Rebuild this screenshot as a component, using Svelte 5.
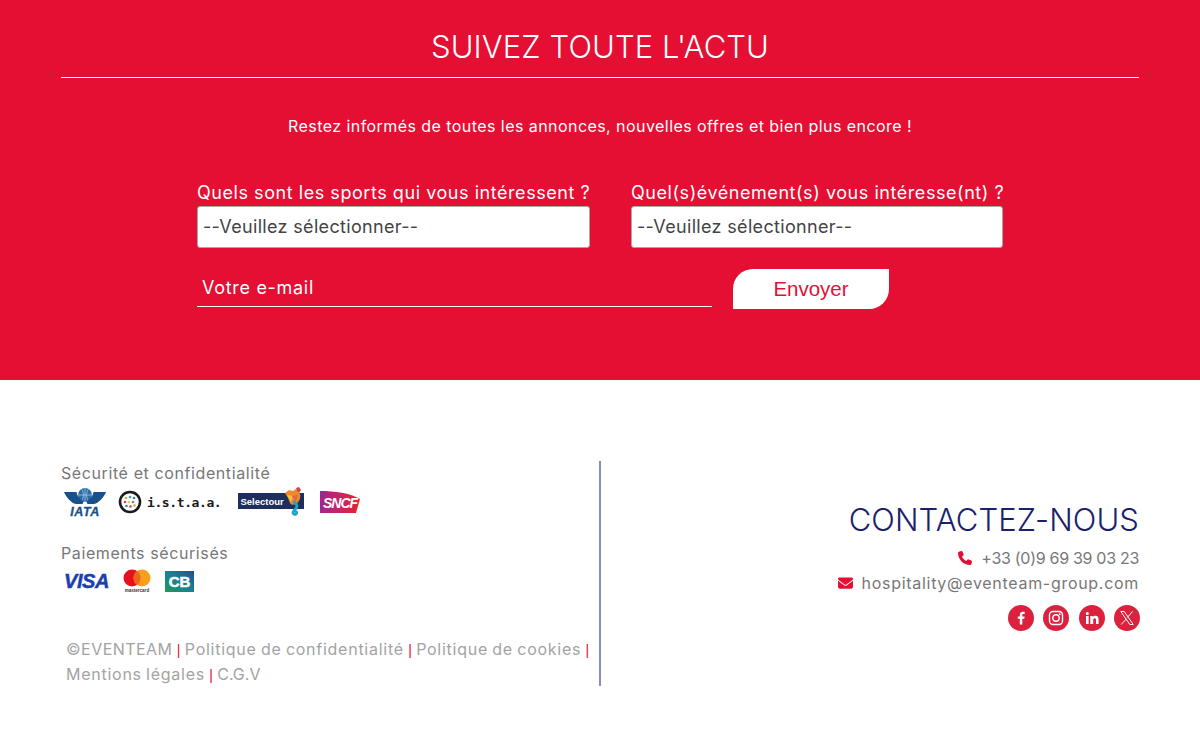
<script>
  const sports = ["--Veuillez sélectionner--"];
  const legal = ["Politique de confidentialité", "Politique de cookies", "Mentions légales", "C.G.V"];
</script>

<section class="newsletter">
  <h2>SUIVEZ TOUTE L'ACTU</h2>
  <p class="intro">Restez informés de toutes les annonces, nouvelles offres et bien plus encore !</p>
  <form class="form" onsubmit={(e) => e.preventDefault()}>
    <div class="selects">
      <label class="field sports">
        <span>Quels sont les sports qui vous intéressent ?</span>
        <select>
          {#each sports as s}<option>{s}</option>{/each}
        </select>
      </label>
      <label class="field events">
        <span>Quel(s)événement(s) vous intéresse(nt) ?</span>
        <select>
          {#each sports as s}<option>{s}</option>{/each}
        </select>
      </label>
    </div>
    <div class="send">
      <input type="email" placeholder="Votre e-mail" />
      <button type="submit">Envoyer</button>
    </div>
  </form>
</section>

<footer>
  <div class="left">
    <p class="cap">Sécurité et confidentialité</p>
    <div class="logos secure">
      <svg class="iata-logo" width="44" height="32" viewBox="0 -1 44 32">
        <circle cx="22" cy="8" r="7" fill="#2a6ca8" />
        <path d="M15 8h14M22 1v14M18.500 2c2.500 3 2.500 9 0 12M25.500 2c-2.500 3-2.500 9 0 12" stroke="#cfe0ee" stroke-width=".6" fill="none" />
        <path d="M1 5h12.500c.5 4 3 7 7 9.500l-1 2.500H13C8 16 3 10 1 5zM43 5H30.500c-.5 4-3 7-7 9.500l1 2.500H31c5-1 10-7 12-12z" fill="#17508a" />
        <text x="22" y="29" class="iata">IATA</text>
      </svg>
      <svg class="istaa" width="105" height="24" viewBox="0 0 105 24">
        <circle cx="12" cy="12" r="10" fill="#fff" stroke="#1a1a1a" stroke-width="2.600" />
        <g>
          <circle cx="8" cy="8" r="1.300" fill="#e9a23b" /><circle cx="12" cy="7" r="1.300" fill="#3aa6a0" /><circle cx="16" cy="8" r="1.300" fill="#5a6fb5" />
          <circle cx="7" cy="12" r="1.300" fill="#d8433f" /><circle cx="11" cy="12" r="1.300" fill="#f0c63c" /><circle cx="15" cy="12" r="1.300" fill="#4aa65a" />
          <circle cx="8.500" cy="16" r="1.300" fill="#3d7fc4" /><circle cx="12.500" cy="16.500" r="1.300" fill="#d8433f" /><circle cx="16.500" cy="15.500" r="1.300" fill="#e9a23b" />
        </g>
        <text x="29" y="17" class="istaa-text">i.s.t.a.a.</text>
      </svg>
      <svg class="selectour" width="68" height="30" viewBox="0 0 68 30">
        <rect x="0" y="6" width="66" height="16" fill="#1d2f5c" />
        <text x="2.500" y="17.500" class="sel-text">Selectour</text>
        <path d="M47 6l4-3 4 1 3-2 4 5c1 4-1 8-4 10-3 1-5 1-6-1l-2-5z" fill="#ef8a2c" />
        <path d="M49 8l6 1-2 6z" fill="#f3c23c" />
        <path d="M54 9l6-1-2 7z" fill="#e8643a" />
        <path d="M58 1l3-1 2 3-2 3-2-2z" fill="#d8433f" />
        <path d="M56 15c3.500 2 3.500 5 1.500 7-2 2-3.500 4-1.500 5 1.500 1 3 0 2.500-2" fill="none" stroke="#19a5c8" stroke-width="2.800" stroke-linecap="round" />
      </svg>
      <svg class="sncf" width="44" height="24" viewBox="0 0 44 24">
        <defs>
          <linearGradient id="sn" x1="0" x2="1" y1="0" y2="0">
            <stop offset="0" stop-color="#a2258f" /><stop offset=".55" stop-color="#c9265f" /><stop offset="1" stop-color="#e8212e" />
          </linearGradient>
        </defs>
        <path d="M2 1c15 0 30 2 40 8l-4 14H2z" fill="url(#sn)" />
        <text x="5" y="18" class="sncf-text">SNCF</text>
      </svg>
    </div>

    <p class="cap pay">Paiements sécurisés</p>
    <div class="logos payment">
      <svg class="visa-logo" width="46" height="20" viewBox="0 0 46 20"><text x="0" y="17" class="visa">VISA</text></svg>
      <svg width="30" height="24" viewBox="0 0 30 24">
        <circle cx="10" cy="9" r="8.500" fill="#e8101c" />
        <circle cx="20" cy="9" r="8.500" fill="#f99e1c" />
        <path d="M15 2.100a8.500 8.500 0 0 1 0 13.800a8.500 8.500 0 0 1 0-13.800z" fill="#f2641e" />
        <text x="15" y="23" class="mc">mastercard</text>
      </svg>
      <svg width="29" height="21" viewBox="0 0 29 21">
        <defs>
          <linearGradient id="cb" x1="0" x2="1" y1="1" y2="0">
            <stop offset="0" stop-color="#1f9a56" /><stop offset=".55" stop-color="#1b7d9a" /><stop offset="1" stop-color="#1c4f94" />
          </linearGradient>
        </defs>
        <rect width="29" height="21" fill="url(#cb)" />
        <text x="14.500" y="16" class="cb">CB</text>
      </svg>
    </div>

    <p class="legal">
      <span class="brand">©EVENTEAM</span> <i>|</i>
      {#each legal as item, idx}
        <span class:short={idx === 3}>{item}</span>{#if idx < legal.length - 1}{" "}<i>|</i>{" "}{/if}
      {/each}
    </p>
  </div>

  <div class="right">
    <h3>CONTACTEZ-NOUS</h3>
    <p class="line phone">
      <svg width="14" height="14" viewBox="0 0 512 512"><path fill="#e50e33" d="M164.900 24.600c-7.700-18.600-28-28.500-47.400-23.200l-88 24C12.100 30.200 0 46 0 64c0 247.400 200.600 448 448 448 18 0 33.800-12.100 38.600-29.500l24-88c5.300-19.400-4.600-39.700-23.200-47.400l-96-40c-16.300-6.800-35.200-2.100-46.300 11.600L304.700 368c-70.400-33.300-127.400-90.300-160.700-160.700l49.300-40.300c13.700-11.200 18.400-30 11.600-46.300l-40-96z" /></svg>
      <span>+33 (0)9 69 39 03 23</span>
    </p>
    <p class="line mail">
      <svg width="15" height="12" viewBox="0 0 512 384"><path fill="#e50e33" d="M48 0C21.500 0 0 21.500 0 48c0 15.100 7.100 29.300 19.200 38.400l217.600 163.200c11.400 8.500 27 8.500 38.400 0L492.800 86.400C504.900 77.300 512 63.100 512 48c0-26.500-21.500-48-48-48H48zM0 112v208c0 35.300 28.700 64 64 64h384c35.300 0 64-28.700 64-64V112L294.400 275.200c-22.800 17.100-54 17.100-76.800 0L0 112z" /></svg>
      <span>hospitality@eventeam-group.com</span>
    </p>
    <div class="social">
      <a href="#fb" aria-label="Facebook"><svg viewBox="0 0 26 26"><path fill="#fff" d="M14.300 19.500v-5.800h2l.3-2.300h-2.300V10c0-.7.2-1.100 1.100-1.100h1.300V6.800c-.3 0-1-.1-1.900-.1-1.800 0-3 1.100-3 3.100v1.600h-2v2.300h2v5.800z" /></svg></a>
      <a href="#ig" aria-label="Instagram"><svg viewBox="0 0 26 26"><rect x="6.500" y="6.500" width="13" height="13" rx="3.500" fill="none" stroke="#fff" stroke-width="1.400" /><circle cx="13" cy="13" r="3.200" fill="none" stroke="#fff" stroke-width="1.400" /><circle cx="16.800" cy="9.200" r=".9" fill="#fff" /></svg></a>
      <a href="#in" aria-label="LinkedIn"><svg viewBox="0 0 26 26"><path fill="#fff" d="M7 11h2.600v8H7zM8.300 7a1.500 1.500 0 1 1 0 3 1.500 1.500 0 0 1 0-3zM11.300 11h2.500v1.100c.4-.7 1.300-1.300 2.600-1.300 2.700 0 3.200 1.700 3.200 4V19H17v-3.700c0-.9 0-2.100-1.300-2.100s-1.500 1-1.500 2V19h-2.900z" /></svg></a>
      <a href="#x" aria-label="X"><svg viewBox="0 0 26 26"><path fill="none" stroke="#fff" stroke-width="1" d="M6.800 6.500h3.400l9 13h-3.400zM18.600 6.500l-5.200 5.900M12.400 13.800l-5.200 5.700" /></svg></a>
    </div>
  </div>
</footer>

<style>
  :global(body) {
    margin: 0;
    background: #fff;
    font-family: Inter, "Open Sans", sans-serif;
  }

  .newsletter {
    box-sizing: border-box;
    height: 380px;
    padding: 0 61px;
    background: #e50e33;
    color: #fff;
  }

  h2 {
    margin: 0;
    padding: 26px 0 10px;
    border-bottom: 1px solid #fff;
    font-size: 31px;
    line-height: 41px;
    font-weight: 300;
    text-align: center;
    letter-spacing: 0.1px;
  }

  .intro {
    margin: 38px 0 0;
    font-size: 16px;
    line-height: 20px;
    text-align: center;
    letter-spacing: 0.44px;
  }

  .form {
    margin: 44px 0 0 136px;
    width: 806px;
  }

  .selects {
    display: flex;
    gap: 41px;
  }

  .field {
    display: flex;
    flex-direction: column;
    font-size: 18px;
    line-height: 24px;
  }

  .sports { width: 393px; }
  .events { width: 372px; }

  .field span {
    white-space: nowrap;
    margin: 1px 0;
    letter-spacing: 0.55px;
  }

  select {
    appearance: none;
    box-sizing: border-box;
    height: 42px;
    padding: 0 5px;
    border: 1px solid #a9a9a9;
    border-radius: 3px;
    background: #fff;
    color: #444;
    font: inherit;
    font-size: 18px;
    letter-spacing: 0.33px;
  }

  .send {
    display: flex;
    align-items: flex-start;
    gap: 21px;
    margin-top: 21px;
  }

  input {
    box-sizing: border-box;
    width: 515px;
    height: 38px;
    padding: 0 5px;
    border: 0;
    border-bottom: 1px solid #fff;
    background: transparent;
    color: #fff;
    font: inherit;
    font-size: 18px;
    letter-spacing: 0.7px;
    outline: none;
  }

  input::placeholder {
    color: #fff;
    opacity: 1;
  }

  button {
    width: 156px;
    height: 40px;
    padding: 0;
    border: 0;
    border-radius: 20px 0 20px 0;
    background: #fff;
    color: #e50e33;
    font-family: "Liberation Sans", Arial, sans-serif;
    font-size: 20.500px;
  }

  footer {
    display: flex;
    justify-content: space-between;
    padding: 81px 61px 0;
  }

  .left {
    box-sizing: border-box;
    width: 540px;
    height: 225px;
    border-right: 2px solid #8a8cbc;
    color: #7a7a7a;
  }

  .cap {
    margin: 0;
    font-size: 16px;
    line-height: 24px;
    color: #777;
    letter-spacing: 0.6px;
  }

  .pay { margin-top: 24px; }

  .logos {
    display: flex;
    align-items: center;
  }

  .secure {
    height: 30px;
    margin-top: 2px;
    padding-left: 2px;
  }

  .iata-logo { margin-right: 11px; }
  .istaa { margin-right: 15px; }
  .selectour { margin-right: 12px; }

  .payment {
    height: 26px;
    margin-top: 3px;
    gap: 13px;
    padding-left: 3px;
  }

  .visa-logo { margin-right: -1px; }

  .legal {
    margin: 43px 0 0 5px;
    font-size: 16px;
    line-height: 24px;
    color: #a3a3a3;
    letter-spacing: 0.74px;
    word-spacing: -0.9px;
  }

  .brand { letter-spacing: 0.45px; }
  .short { letter-spacing: 0; }

  .legal i {
    font-family: "Liberation Sans", sans-serif;
    font-style: normal;
    font-size: 14px;
    letter-spacing: 0;
    color: #e50e33;
  }

  .iata {
    font: italic 700 12.500px "Liberation Sans", sans-serif;
    fill: #17508a;
    stroke: #17508a;
    stroke-width: 0.3;
    text-anchor: middle;
    letter-spacing: 0.6px;
  }

  .istaa-text {
    font: 700 13px "DejaVu Sans Mono", monospace;
    fill: #1a1a1a;
    letter-spacing: -0.4px;
  }

  .sel-text {
    font: 700 9.500px "Liberation Sans", sans-serif;
    fill: #fff;
  }

  .sncf-text {
    font: italic 700 14px "Liberation Sans", sans-serif;
    fill: #fff;
    letter-spacing: -1px;
  }

  .visa {
    font: italic 700 20px "Liberation Sans", sans-serif;
    fill: #1a3fb0;
    stroke: #1a3fb0;
    stroke-width: 0.5;
    letter-spacing: -0.4px;
  }

  .mc {
    font: 700 4.500px "Liberation Sans", sans-serif;
    fill: #333;
    text-anchor: middle;
  }

  .cb {
    font: 700 15px "Liberation Sans", sans-serif;
    fill: #fff;
    stroke: #fff;
    stroke-width: 0.5;
    text-anchor: middle;
  }

  .right {
    display: flex;
    flex-direction: column;
    align-items: flex-end;
    padding-top: 34px;
    color: #777;
  }

  h3 {
    margin: 0;
    font-size: 31px;
    line-height: 50px;
    font-weight: 300;
    letter-spacing: 0.1px;
    color: #1c1f6b;
  }

  .line {
    display: flex;
    align-items: center;
    gap: 9px;
    margin: 0;
    height: 25px;
    font-size: 16px;
  }

  .phone span { letter-spacing: -0.3px; }
  .mail span { letter-spacing: 0.7px; }

  .social {
    display: flex;
    gap: 9.500px;
    margin: 10px -1px 0 0;
  }

  .social a {
    display: block;
    width: 26px;
    height: 26px;
    border-radius: 50%;
    background: #dc213f;
  }

  .social svg {
    display: block;
    width: 26px;
    height: 26px;
  }
</style>
